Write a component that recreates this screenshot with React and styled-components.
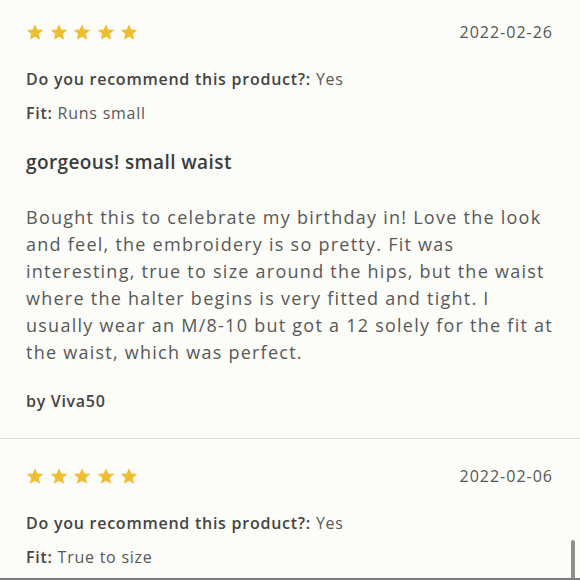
import React from "react";
import styled, { createGlobalStyle } from "styled-components";

const GlobalStyle = createGlobalStyle`
  html, body {
    margin: 0;
    padding: 0;
    background: #fcfcf9;
  }
  body {
    font-family: "Open Sans", "Noto Sans", sans-serif;
    overflow: hidden;
  }
`;

const Page = styled.div`
  position: relative;
  width: 580px;
  height: 580px;
  overflow: hidden;
  background: #fcfcf9;
  border-bottom: 2px solid #7a7a7a;
  box-sizing: border-box;
`;

const Review = styled.div`
  padding: ${({ first }) => (first ? "20px" : "25px")} 27px 27px 26px;
  border-bottom: 1px solid #dcdcd8;
`;

const TopRow = styled.div`
  display: flex;
  justify-content: space-between;
  align-items: center;
  height: 24px;
`;

const Stars = styled.div`
  display: flex;
  gap: 5.5px;
`;

const DateText = styled.span`
  font-size: 16px;
  color: #555;
  letter-spacing: 1px;
`;

const Field = styled.p`
  margin: ${({ top }) => top}px 0 0;
  font-size: 16px;
  line-height: 20px;
  letter-spacing: 0.75px;
  color: #585858;

  b {
    font-weight: 600;
    color: #444;
  }
`;

const Title = styled.h3`
  margin: 27px 0 0;
  font-size: 19px;
  line-height: 24px;
  font-weight: 600;
  letter-spacing: 0.4px;
  color: #3c3c3c;
`;

const Body = styled.p`
  margin: 30px -3px 0 0;
  font-size: 18px;
  line-height: 27px;
  letter-spacing: 1.25px;
  color: #585858;
`;

const Author = styled.p`
  margin: 25px 0 0;
  font-size: 16px;
  line-height: 20px;
  font-weight: 600;
  letter-spacing: 0.7px;
  color: #444;
`;

const Scrollbar = styled.div`
  position: absolute;
  right: 5px;
  bottom: 0;
  width: 4px;
  height: 38px;
  border-radius: 2px 2px 0 0;
  background: #8f8f8f;
`;

const Star = () => (
  <svg width="18" height="18" viewBox="0 0 24 24">
    <path
      d="M12 1.5l3.1 7.2 7.8.7-5.9 5.2 1.8 7.7L12 18.3l-6.8 4 1.8-7.7L1.1 9.4l7.8-.7z"
      fill="#efbd30"
    />
  </svg>
);

const reviews = [
  {
    date: "2022-02-26",
    recommend: "Yes",
    fit: "Runs small",
    title: "gorgeous! small waist",
    body:
      "Bought this to celebrate my birthday in! Love the look and feel, the embroidery is so pretty. Fit was interesting, true to size around the hips, but the waist where the halter begins is very fitted and tight. I usually wear an M/8-10 but got a 12 solely for the fit at the waist, which was perfect.",
    author: "Viva50",
  },
  {
    date: "2022-02-06",
    recommend: "Yes",
    fit: "True to size",
  },
];

export default function App() {
  return (
    <>
      <GlobalStyle />
      <Page>
        {reviews.map((r, i) => (
          <Review key={i} first={i === 0}>
            <TopRow>
              <Stars>
                {[0, 1, 2, 3, 4].map((s) => (
                  <Star key={s} />
                ))}
              </Stars>
              <DateText>{r.date}</DateText>
            </TopRow>
            <Field top={25}>
              <b>Do you recommend this product?:</b> {r.recommend}
            </Field>
            <Field top={14}>
              <b>Fit:</b> {r.fit}
            </Field>
            {r.title && <Title>{r.title}</Title>}
            {r.body && <Body>{r.body}</Body>}
            {r.author && <Author>by {r.author}</Author>}
          </Review>
        ))}
        <Scrollbar />
      </Page>
    </>
  );
}
